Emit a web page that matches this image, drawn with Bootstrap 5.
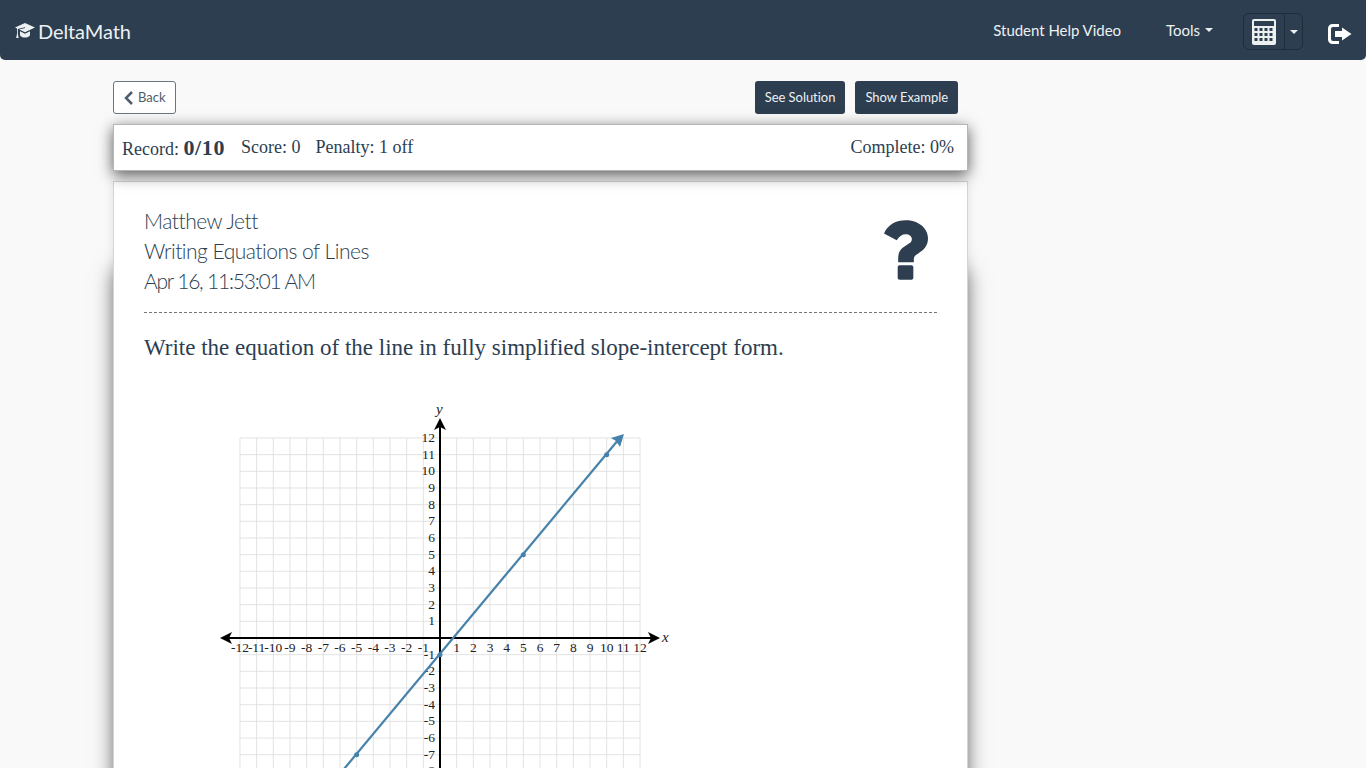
<!DOCTYPE html>
<html lang="en">
<head>
  <meta charset="UTF-8" />
  <meta name="viewport" content="width=device-width, initial-scale=1.0"/>
  <title>DeltaMath</title>
  <link href="https://cdn.jsdelivr.net/npm/bootstrap@5.3.2/dist/css/bootstrap.min.css" rel="stylesheet"/>
  <style>
    html, body { height: 100vh; overflow: hidden; }
    body {
      background: #f9f9f9;
      color: #2c3e50;
      font-family: "Lato", sans-serif;
    }
    .dm-nav {
      background: #2c3e50;
      height: 60px;
      padding: 0 14px 0 15px;
      border-radius: 0 0 5px 5px;
    }
    .dm-brand { color: #ecf0f1; font-size: 20px; line-height: 1; gap: 3px; margin-top: 2px; letter-spacing: -.1px; }
    .dm-brand svg { margin-top: -2px; }
    .dm-link { color: #ecf0f1; font-size: 15px; text-decoration: none; letter-spacing: -.03px; }
    .dm-link.dropdown-toggle::after { margin-left: 5px; }
    .dm-help { margin-right: 45px; }
    .dm-tools { margin-right: 30px; }
    .dm-calc { height: 37px; margin-top: 3px; }
    .dm-calc .btn {
      background: #2c3e50;
      border: 1px solid #1f2d3b;
      color: #ecf0f1;
      padding: 0;
      display: flex;
      align-items: center;
      justify-content: center;
    }
    .dm-calc .dm-calc-main { width: 42px; }
    .dm-calc .dm-calc-drop { width: 19px; }
    .dm-calc .dropdown-toggle::after { margin: 0; }
    .dm-exit { margin-left: 25px; margin-top: 8px; }
    .dm-wrap { width: 855px; margin-left: 113px; }
    .dm-top { height: 64px; padding: 21px 10px 0 0; }
    .dm-actions { gap: 10px; }
    .dm-back {
      background: #fff;
      border: 1px solid #6c757d;
      color: #4f5d6b;
      font-size: 13px;
      height: 33px;
      padding: 0 9px 0 10px;
      border-radius: 3px;
      gap: 5px;
    }
    .dm-dark {
      background: #2c3e50;
      border: 0;
      color: #ecf0f1;
      font-size: 13px;
      height: 33px;
      padding: 0 10px;
      border-radius: 3px;
      letter-spacing: -.04px;
    }
    .dm-dark:hover { background: #34495e; color: #fff; }
    .dm-serif { font-family: "Liberation Serif", serif; }
    .dm-record {
      background: #fff;
      border: 1px solid #b5b5b5;
      height: 47px;
      padding: 0 13px 0 8px;
      font-size: 18px;
      box-shadow: 0 4px 14px rgba(0,0,0,.65);
      position: relative;
      z-index: 2;
    }
    .dm-record b { font-size: 22px; letter-spacing: .6px; }
    .dm-penalty { margin-left: 15px; }
    .dm-sheet {
      position: relative;
      margin-top: 10px;
      background: #fff;
      border: 1px solid #d5d5d5;
      padding: 24px 30px 0;
      height: 720px;
      box-shadow: 0 0 10px rgba(0,0,0,.1);
    }
    .dm-sheet::before {
      content: "";
      position: absolute;
      top: 88px;
      bottom: 0;
      left: 0;
      right: 0;
      box-shadow: 0 0 20px rgba(0,0,0,.55);
      z-index: -1;
    }
    .dm-hand { font-size: 21px; line-height: 30px; font-weight: 300; letter-spacing: -.5px; }
    .dm-hand-tight { letter-spacing: -1.2px; }
    .dm-head { height: 107px; border-bottom: 1px dashed #777; }
    .dm-mark { margin: 14px 9px 0 0; }
    .dm-ask { font-size: 23px; margin: 18px 0 0; line-height: 34px; }
    .dm-graph { display: block; margin: 35px 0 0 70px; }
    .dm-graph text { font-family: "Liberation Serif", serif; font-size: 13.5px; fill: #222; }
    .dm-graph .dm-axlab { font-style: italic; font-size: 15px; }
  </style>
</head>
<body>
  <nav class="dm-nav d-flex align-items-center">
    <div class="dm-brand d-flex align-items-center">
      <svg width="20" height="17" viewBox="0 0 24 20" fill="#ecf0f1"><path d="M12 1 24 6.5 12 12 5 8.8 12.4 7 12 6 3.4 8.2V14l1 5H1.4l1-5V7.6L0 6.5z"/><path d="M6 11l6 2.8 6-2.8v4c0 2-3 3.5-6 3.500s-6-1.500-6-3.500z"/></svg>
      <span>DeltaMath</span>
    </div>
    <div class="ms-auto d-flex align-items-center">
      <a class="dm-link dm-help" href="#">Student Help Video</a>
      <a class="dm-link dm-tools dropdown-toggle" href="#">Tools</a>
      <div class="btn-group dm-calc">
        <button class="btn dm-calc-main" type="button" aria-label="Calculator">
          <svg width="24" height="26" viewBox="0 0 24 26"><rect x="0" y="0" width="24" height="26" rx="2" fill="#ecf0f1"/><rect x="2" y="2" width="20" height="5" fill="#2c3e50"/><g fill="#2c3e50"><rect x="2.500" y="9" width="3" height="3"/><rect x="7.500" y="9" width="3" height="3"/><rect x="12.500" y="9" width="3" height="3"/><rect x="17.500" y="9" width="3" height="3"/><rect x="2.500" y="14" width="3" height="3"/><rect x="7.500" y="14" width="3" height="3"/><rect x="12.500" y="14" width="3" height="3"/><rect x="17.500" y="14" width="3" height="3"/><rect x="2.500" y="19" width="3" height="3"/><rect x="7.500" y="19" width="3" height="3"/><rect x="12.500" y="19" width="3" height="3"/><rect x="17.500" y="19" width="3" height="3"/></g></svg>
        </button>
        <button class="btn dm-calc-drop dropdown-toggle" type="button" aria-label="Calculator menu"></button>
      </div>
      <svg class="dm-exit" width="24" height="20" viewBox="0 0 24 20" fill="#fff"><path d="M4.500 0H11v3H5a2 2 0 0 0-2 2v10a2 2 0 0 0 2 2h6v3H4.500A4.500 4.500 0 0 1 0 15.500v-11A4.500 4.500 0 0 1 4.500 0z"/><path d="M14 3.500 23.500 10 14 16.500V13H7V7h7z"/></svg>
    </div>
  </nav>

  <div class="dm-wrap">
    <div class="dm-top d-flex justify-content-between align-items-start">
      <button class="btn dm-back d-flex align-items-center" type="button">
        <svg width="9" height="14" viewBox="0 0 9 14" fill="none" stroke="#4f5d6b" stroke-width="2.500"><path d="M8 1 2 7 8 13"/></svg>
        Back
      </button>
      <div class="d-flex dm-actions">
        <button class="btn dm-dark" type="button">See Solution</button>
        <button class="btn dm-dark" type="button">Show Example</button>
      </div>
    </div>

    <div class="dm-record dm-serif d-flex align-items-center">
      <span>Record: <b>0/10</b></span>
      <span class="ms-3">Score: 0</span>
      <span class="dm-penalty">Penalty: 1 off</span>
      <span class="ms-auto">Complete: 0%</span>
    </div>

    <div class="dm-sheet">
      <div class="dm-head d-flex justify-content-between align-items-start">
        <div class="dm-hand">
          <div>Matthew Jett</div>
          <div>Writing Equations of Lines</div>
          <div class="dm-hand-tight">Apr 16, 11:53:01 AM</div>
        </div>
        <svg class="dm-mark" width="44" height="60" viewBox="0 0 45 61" fill="#2c3e50"><path d="M0 13.500C4 4.500 12 0 22.500 0 34.500 0 45 7.500 45 18.500c0 8-4.500 12-10 15.500-3.500 2.200-4.500 3.500-4.500 6.500v2.500H14.500v-4c0-6.500 3-10 8-13 3.500-2.200 6-3.700 6-6.500 0-3-3-5-6.300-5-3.700 0-6.200 2-9.200 6z"/><rect x="14" y="46" width="16" height="15" rx="2"/></svg>
      </div>
      <p class="dm-ask dm-serif">Write the equation of the line in fully simplified slope-intercept form.</p>
      <svg class="dm-graph" id="graph" width="460" height="480" viewBox="215 400 460 480"></svg>
    </div>
  </div>

  <script src="https://cdn.jsdelivr.net/npm/bootstrap@5.3.2/dist/js/bootstrap.bundle.min.js"></script>
  <script>
    // coordinate plane, -12..12 on both axes
    const ns = 'http://www.w3.org/2000/svg';
    const graph = document.getElementById('graph');
    const ox = 441, oy = 638, u = 16.67;
    const px = x => ox + x * u;
    const py = y => oy - y * u;
    function add(tag, attrs, txt) {
      const el = document.createElementNS(ns, tag);
      Object.keys(attrs).forEach(k => el.setAttribute(k, attrs[k]));
      if (txt !== undefined) el.textContent = txt;
      graph.appendChild(el);
      return el;
    }
    for (let i = -12; i <= 12; i++) {
      add('line', { x1: px(i), x2: px(i), y1: py(12), y2: py(-12), stroke: '#e0e0e0', 'stroke-width': .9 });
      add('line', { x1: px(-12), x2: px(12), y1: py(i), y2: py(i), stroke: '#e0e0e0', 'stroke-width': .9 });
    }
    // axes
    add('line', { x1: 226, x2: 656, y1: oy, y2: oy, stroke: '#000', 'stroke-width': 2 });
    add('line', { x1: ox, x2: ox, y1: 424, y2: 852, stroke: '#000', 'stroke-width': 2 });
    add('path', { d: 'M221 638 233 632 230 638 233 644z', fill: '#000' });
    add('path', { d: 'M661 638 649 632 652 638 649 644z', fill: '#000' });
    add('path', { d: 'M441 418 435 430 441 427 447 430z', fill: '#000' });
    add('path', { d: 'M441 858 435 846 441 849 447 846z', fill: '#000' });
    add('text', { x: 663, y: 642, class: 'dm-axlab' }, 'x');
    add('text', { x: 437, y: 414, class: 'dm-axlab' }, 'y');
    for (let i = -12; i <= 12; i++) {
      if (i === 0) continue;
      add('text', { x: px(i), y: 652, 'text-anchor': 'middle' }, i);
      add('text', { x: 436, y: py(i) + 4, 'text-anchor': 'end' }, i);
    }
    // the line y = 6/5 x - 1
    const blue = '#4682ab';
    add('line', { x1: 620, y1: 439, x2: 300, y2: 823, stroke: blue, 'stroke-width': 2.2 });
    add('path', { d: 'M625 434 621 447 617 441 612 438z', fill: blue });
    [[-5, -7], [0, -1], [5, 5], [10, 11]].forEach(p => {
      add('circle', { cx: px(p[0]), cy: py(p[1]), r: 2.500, fill: blue });
    });
  </script>
</body>
</html>
